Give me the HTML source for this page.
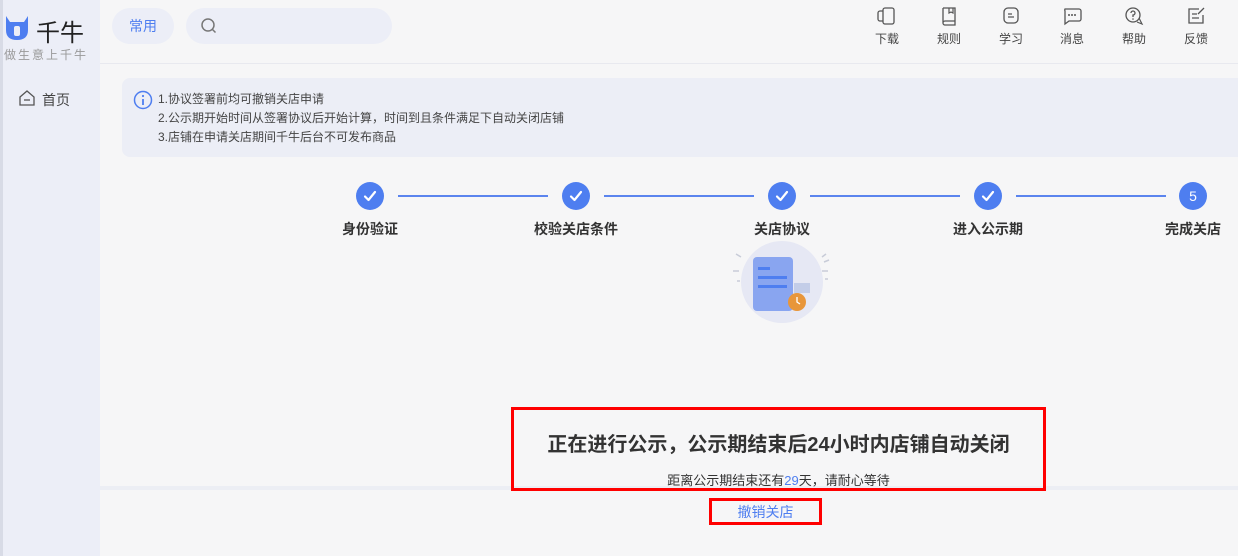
<!DOCTYPE html>
<html><head><meta charset="utf-8"><style>
*{margin:0;padding:0;box-sizing:border-box}
body{width:1238px;height:556px;background:#f6f6f7;font-family:"Liberation Sans","Noto Sans CJK SC",sans-serif;position:relative;overflow:hidden;color:#333}
.abs{position:absolute}
.side{left:0;top:0;width:100px;height:556px;background:#eceef7}
.top{left:100px;top:0;width:1138px;height:64px;border-bottom:1px solid #e8e9ef;background:#f6f6f7}
.step{width:28px;height:28px;border-radius:50%;background:#4e7ef0;color:#fff;text-align:center;line-height:28px;font-size:14px;top:182px}
.lbl{top:219px;font-size:14px;font-weight:bold;color:#333;white-space:nowrap;transform:translateX(-50%)}
.ln{top:195px;height:2px;background:#5b84ee}
.tb{top:6px;width:50px;text-align:center;font-size:12px;color:#444}
.tb svg{display:block;margin:0 auto 4px}
</style></head><body>
<div class="abs side"></div>
<div class="abs" style="left:0;top:0;width:3px;height:556px;background:#d8dbe6"></div>
<svg class="abs" style="left:4px;top:14px" width="26" height="28" viewBox="0 0 26 28"><path d="M2 2 L6 8 L20 8 L24 2 L24 16 Q24 26 13 26 Q2 26 2 16Z" fill="#4e7ef0"/><rect x="10" y="12" width="6" height="10" rx="2" fill="#eceef7"/></svg>
<div class="abs" style="left:36px;top:13px;font-size:24px;color:#222">千牛</div>
<div class="abs" style="left:4px;top:46px;font-size:12px;color:#999;letter-spacing:2px">做生意上千牛</div>
<svg class="abs" style="left:18px;top:90px" width="18" height="16" viewBox="0 0 18 16"><path d="M2 7 L9 1 L16 7 L16 15 L2 15Z" fill="none" stroke="#555" stroke-width="1.3"/><path d="M6 10h6" stroke="#555" stroke-width="1.3"/></svg>
<div class="abs" style="left:42px;top:90px;font-size:14px;color:#444">首页</div>
<div class="abs top"></div>
<div class="abs" style="left:112px;top:8px;width:62px;height:36px;border-radius:18px;background:#eceef7;color:#4e7ef0;font-size:14px;text-align:center;line-height:36px">常用</div>
<div class="abs" style="left:186px;top:8px;width:206px;height:36px;border-radius:18px;background:#eceef7"></div>
<svg class="abs" style="left:200px;top:17px" width="18" height="18" viewBox="0 0 18 18"><circle cx="8" cy="8" r="6" fill="none" stroke="#777" stroke-width="1.5"/><path d="M12.5 12.5l3 3" stroke="#777" stroke-width="1.5"/></svg>
<div class="abs tb" style="left:862px"><svg width="22" height="20" viewBox="0 0 22 20"><rect x="7" y="2" width="11" height="16" rx="2" fill="none" stroke="#555" stroke-width="1.3"/><path d="M7 5H4a2 2 0 0 0-2 2v6a2 2 0 0 0 2 2h3" fill="none" stroke="#555" stroke-width="1.3"/></svg>下载</div>
<div class="abs tb" style="left:924px"><svg width="22" height="20" viewBox="0 0 22 20"><path d="M5 2h12v13H7a2 2 0 0 0 0 4h10V15M5 2v15" fill="none" stroke="#555" stroke-width="1.3"/><path d="M11 2v5l2-1 2 1V2" fill="none" stroke="#555" stroke-width="1.2"/></svg>规则</div>
<div class="abs tb" style="left:986px"><svg width="22" height="20" viewBox="0 0 22 20"><rect x="4" y="2" width="14" height="15" rx="4" fill="none" stroke="#555" stroke-width="1.3"/><path d="M8 8h4M8 11h6" stroke="#555" stroke-width="1.3"/></svg>学习</div>
<div class="abs tb" style="left:1047px"><svg width="22" height="20" viewBox="0 0 22 20"><path d="M4 3h14a2 2 0 0 1 2 2v8a2 2 0 0 1-2 2H8l-4 3V5a2 2 0 0 1 0-2z" fill="none" stroke="#555" stroke-width="1.3"/><circle cx="8" cy="9" r="1" fill="#555"/><circle cx="11" cy="9" r="1" fill="#555"/><circle cx="14" cy="9" r="1" fill="#555"/></svg>消息</div>
<div class="abs tb" style="left:1109px"><svg width="22" height="20" viewBox="0 0 22 20"><circle cx="10" cy="9" r="7" fill="none" stroke="#555" stroke-width="1.3"/><path d="M8 7a2 2 0 1 1 2 2v2" fill="none" stroke="#555" stroke-width="1.3"/><circle cx="10" cy="13" r=".8" fill="#555"/><path d="M16 12l3 6-5-2" fill="none" stroke="#555" stroke-width="1.2"/></svg>帮助</div>
<div class="abs tb" style="left:1171px"><svg width="22" height="20" viewBox="0 0 22 20"><path d="M14 3H4v14h14V9" fill="none" stroke="#555" stroke-width="1.3"/><path d="M7 8h5M7 12h7M13 8l6-6" stroke="#555" stroke-width="1.3"/></svg>反馈</div>

<div class="abs" style="left:122px;top:78px;width:1130px;height:79px;border-radius:8px;background:#eceef6"></div>
<svg class="abs" style="left:133px;top:90px" width="20" height="20" viewBox="0 0 20 20"><circle cx="10" cy="10" r="8.5" fill="none" stroke="#4e7ef0" stroke-width="1.5"/><circle cx="10" cy="6" r="1.1" fill="#4e7ef0"/><path d="M10 9v6" stroke="#4e7ef0" stroke-width="1.8"/></svg>
<div class="abs" style="left:158px;top:90px;font-size:12px;color:#444;line-height:19px">1.协议签署前均可撤销关店申请<br>2.公示期开始时间从签署协议后开始计算，时间到且条件满足下自动关闭店铺<br>3.店铺在申请关店期间千牛后台不可发布商品</div>

<div class="abs ln" style="left:398px;width:150px"></div>
<div class="abs ln" style="left:604px;width:150px"></div>
<div class="abs ln" style="left:810px;width:150px"></div>
<div class="abs ln" style="left:1016px;width:150px"></div>
<svg width="0" height="0" style="position:absolute"><defs><path id="ck" d="M9 14.5l3.5 3.5 6.5-8" fill="none" stroke="#fff" stroke-width="2.2" stroke-linecap="round" stroke-linejoin="round"/></defs></svg>
<svg class="abs step" style="left:356px" viewBox="0 0 28 28"><use href="#ck"/></svg>
<svg class="abs step" style="left:562px" viewBox="0 0 28 28"><use href="#ck"/></svg>
<svg class="abs step" style="left:768px" viewBox="0 0 28 28"><use href="#ck"/></svg>
<svg class="abs step" style="left:974px" viewBox="0 0 28 28"><use href="#ck"/></svg>
<div class="abs step" style="left:1179px">5</div>
<div class="abs lbl" style="left:370px">身份验证</div>
<div class="abs lbl" style="left:576px">校验关店条件</div>
<div class="abs lbl" style="left:782px">关店协议</div>
<div class="abs lbl" style="left:988px">进入公示期</div>
<div class="abs lbl" style="left:1193px">完成关店</div>

<svg class="abs" style="left:720px;top:240px" width="124" height="90" viewBox="0 0 124 90"><circle cx="62" cy="42" r="41" fill="#e6e8f4"/><rect x="33" y="17" width="40" height="54" rx="4" fill="#89a5f0"/><rect x="38" y="27" width="12" height="3" fill="#4e7ef0"/><rect x="38" y="36" width="29" height="3" fill="#4e7ef0"/><rect x="38" y="45" width="29" height="3" fill="#4e7ef0"/><rect x="74" y="43" width="16" height="10" fill="#c3cde8"/><circle cx="77" cy="62" r="9" fill="#e8963a"/><path d="M77 57v5l3 2" stroke="#fff" stroke-width="1.3" fill="none"/><path d="M16 14l5 3M13 31h6M17 41h3M106 14l-4 3M104 22l5-2M102 31h6M105 39h3" stroke="#c8ccd8" stroke-width="1.5"/></svg>

<div class="abs" style="left:100px;top:486px;width:1138px;height:4px;background:#eceef4"></div>
<div class="abs" style="left:511px;top:407px;width:535px;height:84px;border:3px solid #f00"></div>
<div class="abs" style="left:511px;top:428px;width:535px;text-align:center;font-size:20px;font-weight:bold;color:#333">正在进行公示，公示期结束后24小时内店铺自动关闭</div>
<div class="abs" style="left:511px;top:470px;width:535px;text-align:center;font-size:13px;color:#333">距离公示期结束还有<span style="color:#4e7ef0">29</span>天，请耐心等待</div>
<div class="abs" style="left:709px;top:498px;width:113px;height:27px;border:3px solid #f00"></div>
<div class="abs" style="left:709px;top:502px;width:113px;text-align:center;font-size:14px;color:#4e7ef0">撤销关店</div>
</body></html>
